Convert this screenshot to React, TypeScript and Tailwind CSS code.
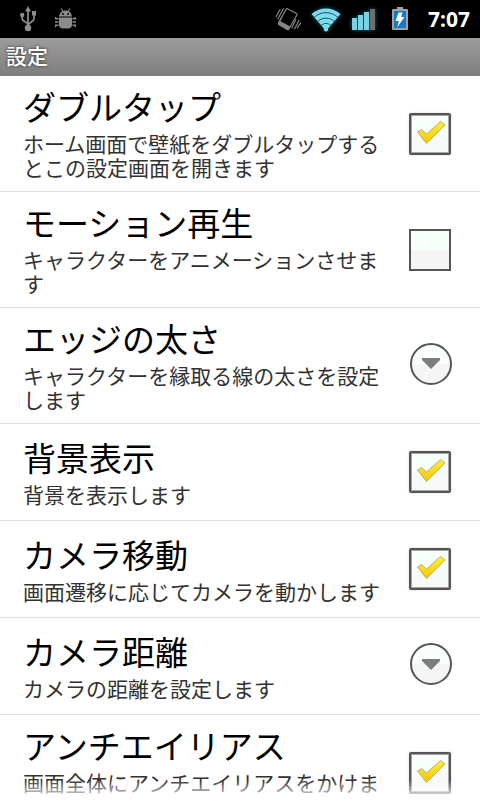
import { useState } from "react";

interface Preference {
  id: string;
  title: string;
  summary: string;
  type: "check" | "list";
  checked?: boolean;
}

const PREFERENCES: Preference[] = [
  { id: "doubletap", title: "ダブルタップ", summary: "ホーム画面で壁紙をダブルタップするとこの設定画面を開きます", type: "check", checked: true },
  { id: "motion", title: "モーション再生", summary: "キャラクターをアニメーションさせます", type: "check", checked: false },
  { id: "edge", title: "エッジの太さ", summary: "キャラクターを縁取る線の太さを設定します", type: "list" },
  { id: "background", title: "背景表示", summary: "背景を表示します", type: "check", checked: true },
  { id: "camera-move", title: "カメラ移動", summary: "画面遷移に応じてカメラを動かします", type: "check", checked: true },
  { id: "camera-distance", title: "カメラ距離", summary: "カメラの距離を設定します", type: "list" },
  { id: "antialias", title: "アンチエイリアス", summary: "画面全体にアンチエイリアスをかけます", type: "check", checked: true },
];

function UsbIcon() {
  return (
    <svg width="18" height="26" viewBox="0 0 18 26" fill="none" stroke="#8c8c8c" strokeWidth="1.8">
      <path d="M8 3v19" />
      <path d="M2.200 9v3.500C2.200 16 8 15.500 8 19M14 8v4.500C14 16.500 8 16 8 20" />
      <path d="M8 0l3 5.500H5z" fill="#8c8c8c" stroke="none" />
      <circle cx="2.200" cy="9" r="2.200" fill="#8c8c8c" stroke="none" />
      <path d="M12 5h4v4.500h-4z" fill="#8c8c8c" stroke="none" />
      <circle cx="8" cy="22" r="3.200" fill="#8c8c8c" stroke="none" />
    </svg>
  );
}

function DebugIcon() {
  return (
    <svg width="22" height="22" viewBox="0 0 22 22" fill="#8c8c8c">
      <path d="M4 8.500C4.500 4.500 7.500 2.500 10.500 2.500s6 2 6.500 6z" />
      <path d="M6 0.500l2.500 3.500M15 0.500L12.500 4" stroke="#8c8c8c" strokeWidth="1.200" />
      <circle cx="8" cy="6" r="0.900" fill="#000" />
      <circle cx="13" cy="6" r="0.900" fill="#000" />
      <path d="M4 9.500h13v7a4 4 0 0 1-4 4H8a4 4 0 0 1-4-4z" />
      <path d="M0 9h1.300v1H3.500v1.500H0zM0 13.200h3.500v1.500H0zM0 16.500h3.500V18H1.300v1.200H0zM21 9h-1.300v1h-2.200v1.500H21zM21 13.200h-3.500v1.500H21zM21 16.500h-3.500V18h2.200v1.200H21z" />
    </svg>
  );
}

function VibrateIcon() {
  return (
    <svg width="27" height="24" viewBox="0 0 27 24" fill="none" stroke="#858585" strokeWidth="1.200">
      <path d="M12.500 1.800l9 4.600q1 .6.400 1.600L13.800 22q-.6 1-1.600.4L4 17.500q-1-.6-.4-1.600L11 2.400q.6-1 1.500-.6z" />
      <path d="M4.800 14.500l9.700 5.300-1.700 2.700L3.500 17z" fill="#858585" />
      <path d="M1 10l4.300-8M2.700 12.300l6-11M16.700 21.300l4.300-9M19.300 22.300l5-9.300M22 21.300l4-6" />
      <path d="M4.800 13.700l2-3.600" />
    </svg>
  );
}

function WifiIcon() {
  return (
    <svg width="32" height="26" viewBox="0 0 32 26" className="drop-shadow-[0_0_2px_#1c6479]">
      <path d="M1.500 8C9.500 0.500 22.500 0.500 30.500 8L18 22.500a2.200 2.200 0 1 1-4 0z" fill="#7cdcee" />
      <path d="M4 11.500c7-6.500 17-6.500 24 0M7.500 15.500c5-4.500 12-4.500 17 0M11 19.500c3-2.800 7-2.800 10 0" fill="none" stroke="#1d5564" />
    </svg>
  );
}

function SignalIcon() {
  return (
    <svg width="24" height="22" viewBox="0 0 24 22" className="drop-shadow-[0_0_2px_#1c6479]">
      <path d="M0 10h5v12H0zM6 7h5v15H6zM12 4h5v18h-5z" fill="#78d4e4" />
      <path d="M18 1h5v21h-5z" fill="#6e6e6e" />
    </svg>
  );
}

function BatteryIcon() {
  return (
    <svg width="16" height="24" viewBox="0 0 16 24">
      <path d="M5 0h6v2h4a1 1 0 0 1 1 1v19a1 1 0 0 1-1 1H1a1 1 0 0 1-1-1V3a1 1 0 0 1 1-1h4z" fill="#a2a2a2" />
      <path d="M2 4h12v17H2z" fill="#0f7ccb" />
      <path d="M6.500 5.500h4L9 10h3.500L5 20.500 7 14H3.500z" fill="#fff" />
    </svg>
  );
}

function StatusBar() {
  return (
    <header className="flex h-[38px] shrink-0 items-center justify-between bg-black pr-[10px] pl-5">
      <div className="flex items-center gap-[17px]">
        <UsbIcon />
        <DebugIcon />
      </div>
      <div className="flex items-center">
        <VibrateIcon />
        <div className="ml-2"><WifiIcon /></div>
        <div className="ml-[10px]"><SignalIcon /></div>
        <div className="ml-4"><BatteryIcon /></div>
        <time className="ml-5 font-['Noto_Sans','Open_Sans',sans-serif] text-[21px] leading-6 font-bold text-white">7:07</time>
      </div>
    </header>
  );
}

function CheckMark() {
  return (
    <svg width="30" height="25" viewBox="0 0 30 25" className="pointer-events-none absolute top-[7px] left-[7px]">
      <defs>
        <linearGradient id="gold" x1="0" y1="0" x2="0" y2="1">
          <stop offset="0" stopColor="#ffee3c" />
          <stop offset="1" stopColor="#f5c800" />
        </linearGradient>
      </defs>
      <path d="M1.500 12L5.500 9.500 10.500 14 24.500 1.500 29 5 10.500 23.500z" fill="url(#gold)" stroke="#a89b60" strokeWidth="0.800" strokeLinejoin="round" />
    </svg>
  );
}

function PreferenceRow({ pref }: { pref: Preference }) {
  const [checked, setChecked] = useState(!!pref.checked);

  return (
    <li className="flex min-h-[97px] items-center border-b border-[#dedede] pr-7 pl-[23px]">
      <div className="min-w-0 flex-1 pt-[5px] pb-3">
        <label htmlFor={pref.id} className="block text-[33px] leading-[50px] text-black">{pref.title}</label>
        <p className="text-[21px] leading-6 text-[#323232]">{pref.summary}</p>
      </div>
      {pref.type === "check" ? (
        <div className="relative mr-px ml-6 size-[42px] shrink-0">
          <input
            id={pref.id}
            type="checkbox"
            checked={checked}
            onChange={(e) => setChecked(e.target.checked)}
            className="block size-[42px] appearance-none border-2 border-[#555] bg-linear-to-b from-[#f8fffb] from-50% to-[#f5f5f5] to-50% checked:rounded-[2px] checked:to-[#f6faf8] checked:shadow-[inset_0_0_0_1px_#a5a5a5,0_0_2px_1px_#eee]"
          />
          {checked && <CheckMark />}
        </div>
      ) : (
        <button
          id={pref.id}
          type="button"
          aria-haspopup="listbox"
          className="mb-1 ml-6 flex size-[42px] shrink-0 items-center justify-center rounded-full border-2 border-[#555] bg-linear-to-b from-[#f8fffb] from-50% to-[#f5f5f5] to-50%"
        >
          <svg width="18" height="11" viewBox="0 0 18 11">
            <path d="M0 0h18v2l-9 9-9-9z" fill="#7d7d7d" />
          </svg>
        </button>
      )}
    </li>
  );
}

export default function App() {
  return (
    <div className="flex h-screen flex-col overflow-hidden bg-white font-['Noto_Sans_CJK_JP',sans-serif]">
      <StatusBar />
      <h1 className="h-[38px] shrink-0 bg-linear-to-b from-[#9c9c9c] to-[#7e7e7e] px-[6px] text-[21px] leading-[34px] font-medium text-white text-shadow-[0_0_3px_#222]">
        設定
      </h1>
      <main className="relative min-h-0 flex-1 overflow-hidden">
        <ul>
          {PREFERENCES.map((pref) => (
            <PreferenceRow key={pref.id} pref={pref} />
          ))}
        </ul>
        {/* fading edge */}
        <div className="pointer-events-none absolute inset-x-0 bottom-0 h-5 bg-linear-to-b from-white/0 to-white" />
      </main>
    </div>
  );
}
